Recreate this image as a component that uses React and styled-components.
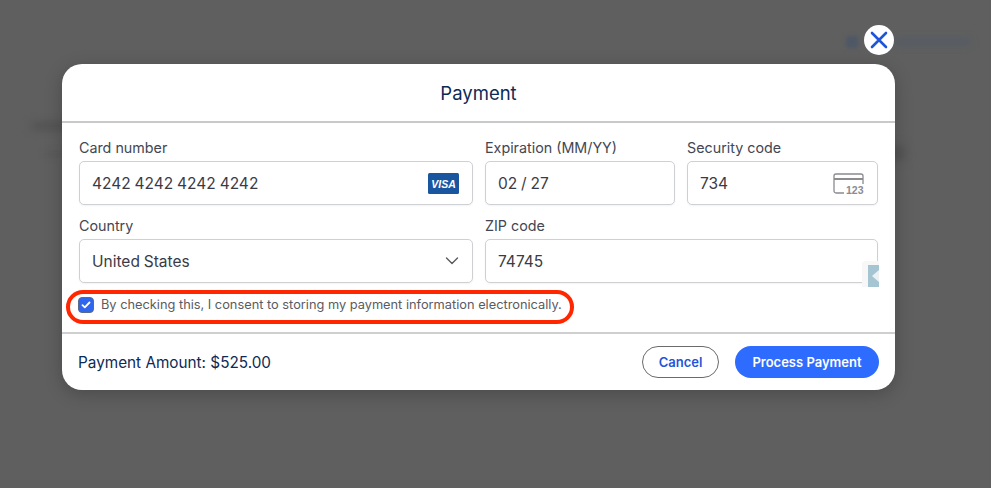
import React from 'react';
import styled, { createGlobalStyle } from 'styled-components';

const GlobalStyle = createGlobalStyle`
  html, body {
    margin: 0;
    padding: 0;
    height: 100%;
    background: #5f5f5f;
    overflow: hidden;
  }

  * {
    box-sizing: border-box;
  }
`;

const Page = styled.div`
  position: relative;
  width: 991px;
  height: 488px;
  padding: 64px 96px 0 62px;
  background: #5f5f5f;
  font-family: Inter, 'Liberation Sans', sans-serif;
  overflow: hidden;
`;

const Smudge = styled.div`
  position: absolute;
  left: ${(props) => props.x}px;
  top: ${(props) => props.y}px;
  width: ${(props) => props.w}px;
  height: ${(props) => props.h}px;
  background: ${(props) => props.color || '#535353'};
  filter: blur(${(props) => props.blur || 4}px);
`;

const Modal = styled.div`
  position: relative;
  display: flex;
  flex-direction: column;
  width: 833px;
  height: 326px;
  background: #ffffff;
  border-radius: 20px;
  box-shadow: 0 4px 18px rgba(0, 0, 0, 0.22);
`;

const CloseButton = styled.button`
  position: absolute;
  top: -39px;
  right: 1px;
  display: flex;
  align-items: center;
  justify-content: center;
  width: 30px;
  height: 30px;
  padding: 0;
  border: none;
  border-radius: 50%;
  background: #ffffff;
`;

const Header = styled.div`
  display: flex;
  align-items: center;
  justify-content: center;
  height: 59px;
  border-bottom: 2px solid #c9c9c9;
  font-size: 18.5px;
  font-weight: 400;
  color: #0d2a55;
`;

const Body = styled.div`
  flex: 1;
  padding: 16.5px 17px 0;
`;

const FieldGrid = styled.div`
  display: grid;
  grid-template-columns: 394px 190px 191px;
  column-gap: 12px;
  row-gap: 12.5px;
`;

const Field = styled.div`
  position: relative;
  display: flex;
  flex-direction: column;
  grid-column: ${(props) => props.span || 'auto'};
`;

const Label = styled.label`
  height: 17px;
  margin-bottom: 4.5px;
  font-size: 14.3px;
  line-height: 16px;
  color: #424754;
`;

const InputBox = styled.div`
  display: flex;
  align-items: center;
  justify-content: space-between;
  height: 44px;
  padding: 0 ${(props) => props.right || 12}px 0 12px;
  background: #ffffff;
  border: 1px solid #cfd0d3;
  border-radius: 5px;
  box-shadow: 0 1px 2px rgba(0, 0, 0, 0.05);
  font-size: 15.5px;
  word-spacing: -0.5px;
  color: #3a3b46;
`;

const CardBrand = styled.svg`
  width: 31px;
  height: 21px;
`;

const ScrollNub = styled.div`
  position: absolute;
  right: -1px;
  bottom: -4px;
  display: flex;
  justify-content: flex-end;
  width: 17px;
  height: 26px;
  background: #f7f7f7;
  border-radius: 4px 0 0 0;
`;

const NubTile = styled.div`
  display: flex;
  align-items: center;
  justify-content: flex-end;
  width: 11px;
  height: 22px;
  margin-top: 4px;
  background: #a6c5d2;
`;

const NubArrow = styled.div`
  width: 0;
  height: 0;
  border-top: 6px solid transparent;
  border-bottom: 6px solid transparent;
  border-right: 7px solid #ecf2f4;
`;

const ConsentRow = styled.div`
  position: relative;
  display: flex;
  align-items: center;
  gap: 7px;
  height: 16px;
  margin-top: 14px;
  margin-left: -1px;
  font-size: 12.8px;
  color: #5b5b5f;
`;

const ConsentText = styled.span`
  margin-top: -2px;
`;

const Checkbox = styled.span`
  display: flex;
  align-items: center;
  justify-content: center;
  width: 16px;
  height: 16px;
  flex-shrink: 0;
  background: #2f66f0;
  border: 1px solid #5a6a8c;
  border-radius: 4px;
`;

const Highlight = styled.div`
  position: absolute;
  left: -12px;
  top: -7px;
  width: 508px;
  height: 34px;
  border: 4.5px solid #ff2600;
  border-radius: 17px;
  pointer-events: none;
`;

const Footer = styled.div`
  display: flex;
  align-items: center;
  justify-content: space-between;
  height: 58px;
  padding: 0 16px;
  border-top: 2px solid #cfcfcf;
`;

const Amount = styled.div`
  font-size: 15.3px;
  color: #0d2a55;
`;

const Actions = styled.div`
  display: flex;
  gap: 16px;
`;

const Button = styled.button`
  height: 32px;
  width: ${(props) => props.width}px;
  padding: 0;
  border-radius: 16px;
  border: ${(props) => (props.primary ? 'none' : '1px solid #6b6b6b')};
  background: ${(props) => (props.primary ? '#2d6cff' : '#ffffff')};
  color: ${(props) => (props.primary ? '#ffffff' : '#1f55d8')};
  font-family: inherit;
  font-size: 13px;
  font-weight: 600;
`;

function App() {
  return (
    <Page>
      <GlobalStyle />

      <Smudge x={846} y={36} w={12} h={12} color="#4e5766" blur={2} />
      <Smudge x={893} y={38} w={78} h={8} color="#575c64" blur={3} />
      <Smudge x={32} y={122} w={40} h={8} color="#525252" blur={4} />
      <Smudge x={45} y={152} w={30} h={4} color="#575757" blur={3} />
      <Smudge x={885} y={146} w={20} h={14} color="#525252" blur={5} />

      <Modal>
        <CloseButton aria-label="Close">
          <svg width="20" height="20" viewBox="0 0 20 20" fill="none" stroke="#1f55d8" strokeWidth="2.6" strokeLinecap="round">
            <path d="M3 3 L17 17 M17 3 L3 17" />
          </svg>
        </CloseButton>

        <Header>Payment</Header>

        <Body>
          <FieldGrid>
            <Field>
              <Label>Card number</Label>
              <InputBox right={13}>
                4242 4242 4242 4242
                <CardBrand viewBox="0 0 31 21">
                  <rect width="31" height="21" rx="1.5" fill="#1a569f" />
                  <text x="15.5" y="14.5" textAnchor="middle" fontFamily="'Liberation Sans', sans-serif" fontSize="10.5" fontStyle="italic" fontWeight="700" fill="#ffffff">VISA</text>
                </CardBrand>
              </InputBox>
            </Field>
            <Field>
              <Label>Expiration (MM/YY)</Label>
              <InputBox>02 / 27</InputBox>
            </Field>
            <Field>
              <Label>Security code</Label>
              <InputBox right={13}>
                734
                <svg width="31" height="21" viewBox="0 0 31 21" fill="none">
                  <path d="M11 20 H3 a2 2 0 0 1 -2 -2 V3 a2 2 0 0 1 2 -2 H28 a2 2 0 0 1 2 2 V11" stroke="#8b8b90" strokeWidth="1.3" />
                  <rect x="1" y="5" width="29" height="2" fill="#8b8b90" />
                  <text x="30.5" y="20.5" textAnchor="end" fontFamily="'Liberation Sans', sans-serif" fontSize="10.5" fontWeight="700" fill="#8b8b90">123</text>
                </svg>
              </InputBox>
            </Field>
            <Field>
              <Label>Country</Label>
              <InputBox right={13}>
                United States
                <svg width="14" height="8" viewBox="0 0 14 8" fill="none" stroke="#5a5a60" strokeWidth="1.4" strokeLinecap="round" strokeLinejoin="round">
                  <path d="M1.5 1 L7 6.5 L12.5 1" />
                </svg>
              </InputBox>
            </Field>
            <Field span="2 / 4">
              <Label>ZIP code</Label>
              <InputBox>74745</InputBox>
              <ScrollNub>
                <NubTile>
                  <NubArrow />
                </NubTile>
              </ScrollNub>
            </Field>
          </FieldGrid>

          <ConsentRow>
            <Highlight />
            <Checkbox>
              <svg width="10" height="8" viewBox="0 0 10 8" fill="none" stroke="#ffffff" strokeWidth="1.8" strokeLinecap="round" strokeLinejoin="round">
                <path d="M1.5 4.2 L3.8 6.3 L8.5 1.5" />
              </svg>
            </Checkbox>
            <ConsentText>By checking this, I consent to storing my payment information electronically.</ConsentText>
          </ConsentRow>
        </Body>

        <Footer>
          <Amount>Payment Amount: $525.00</Amount>
          <Actions>
            <Button width={77}>Cancel</Button>
            <Button primary width={144}>Process Payment</Button>
          </Actions>
        </Footer>
      </Modal>
    </Page>
  );
}

export default App;
